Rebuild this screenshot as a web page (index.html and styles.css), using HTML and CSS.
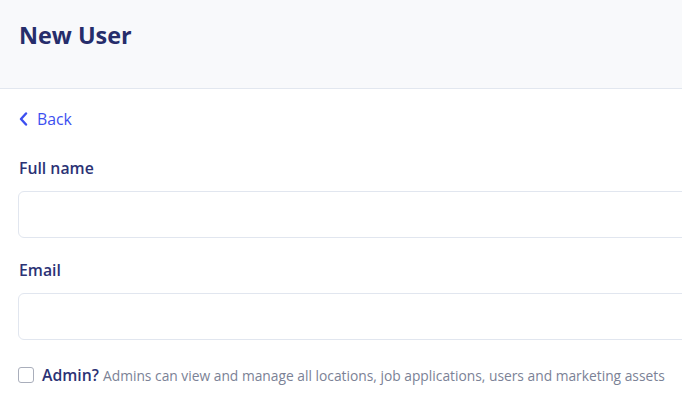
FILE: index.html
```html
<!DOCTYPE html>
<html lang="en">
  <head>
    <meta charset="UTF-8" />
    <meta name="viewport" content="width=device-width, initial-scale=1.0" />
    <title>New User</title>
    <link rel="stylesheet" href="styles.css">
  </head>
  <body>
    <div class="page">
      <header class="page-header">
        <h1>New User</h1>
      </header>

      <main class="page-body">
        <a href="#" class="link-back">
          <svg width="9" height="14" viewBox="0 0 9 14" aria-hidden="true">
            <path d="M7 1.5 L2 7 L7 12.5" fill="none" stroke="currentColor" stroke-width="2.4" stroke-linecap="round" stroke-linejoin="round" />
          </svg>
          Back
        </a>

        <form class="user-form">
          <div class="field">
            <label for="fullName">Full name</label>
            <input type="text" id="fullName" />
          </div>
          <div class="field">
            <label for="email">Email</label>
            <input type="email" id="email" />
          </div>
          <div class="field-check">
            <input type="checkbox" id="admin" />
            <label for="admin">Admin?</label>
            <span class="hint">Admins can view and manage all locations, job applications, users and marketing assets</span>
          </div>
        </form>
      </main>
    </div>
  </body>
</html>
```

FILE: styles.css
```css
* {
  box-sizing: border-box;
}

html {
  overflow: hidden;
}

body {
  margin: 0;
  font-family: "Open Sans", "Noto Sans", sans-serif;
  color: #2b3275;
  background-color: #fff;
}

/* the form runs wider than the window */
.page {
  width: 760px;
}

.page-header {
  height: 89px;
  padding: 0 19px;
  display: flex;
  align-items: center;
  background-color: #f8f9fb;
  border-bottom: 1px solid #e2e7ef;
}

.page-header h1 {
  margin: 0 0 18px;
  font-size: 23.4px;
  font-weight: 700;
  color: #262d6b;
}

.page-body {
  padding: 19px 18px;
}

.link-back {
  display: inline-flex;
  align-items: center;
  gap: 9px;
  padding-left: 1px;
  font-size: 15.8px;
  color: #3c4ff0;
  text-decoration: none;
}

.user-form {
  margin-top: 26px;
}

.field {
  margin-bottom: 21px;
}

.field label {
  display: block;
  margin-bottom: 12px;
  padding-left: 1px;
  font-size: 15.8px;
  font-weight: 600;
  color: #2b3275;
}

.field input {
  display: block;
  width: 100%;
  height: 47px;
  padding: 10px 14px;
  border: 1px solid #e1e6ef;
  border-radius: 6px;
  font: inherit;
}

.field-check {
  display: flex;
  align-items: center;
  margin-top: 24px;
}

.field-check input {
  appearance: none;
  width: 16px;
  height: 16px;
  margin: 0 8px 0 0;
  border: 1px solid #a9aebb;
  border-radius: 3px;
  background-color: #fff;
}

.field-check label {
  font-size: 15.8px;
  font-weight: 600;
  color: #2b3275;
}

.hint {
  margin-left: 4px;
  font-size: 13.8px;
  color: #7b8296;
}
```
